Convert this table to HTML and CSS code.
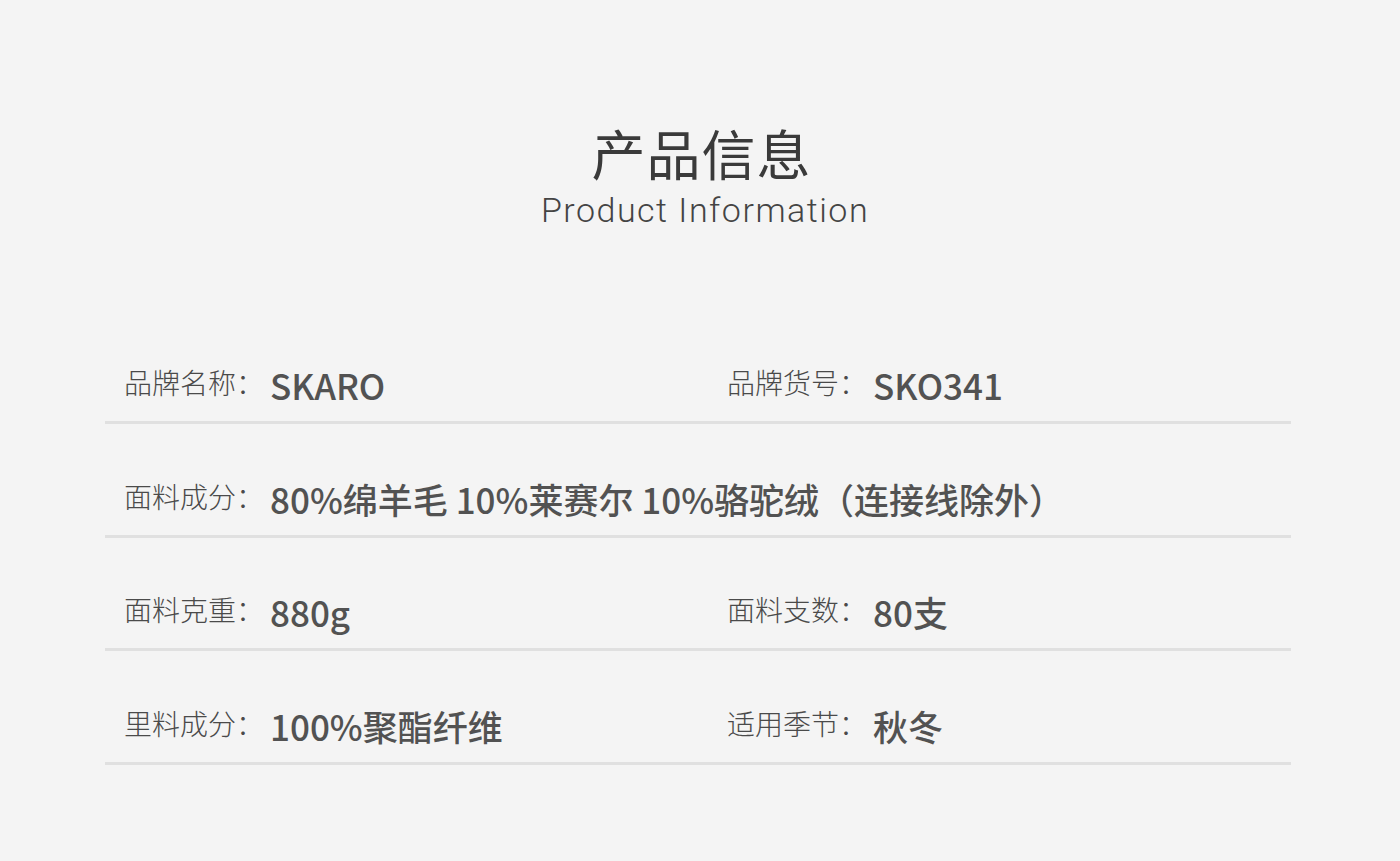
FILE: index.html
```html
<!DOCTYPE html>
<html lang="zh-CN">
<head>
<meta charset="utf-8">
<title>产品信息</title>
<link rel="stylesheet" href="styles.css">
</head>
<body>
<main class="page">
  <header class="header">
    <h1 class="title">产品信息</h1>
    <p class="subtitle">Product Information</p>
  </header>
  <section class="table">
    <div class="row">
      <div class="item"><span class="label">品牌名称：</span><span class="value">SKARO</span></div>
      <div class="item"><span class="label">品牌货号：</span><span class="value">SKO341</span></div>
    </div>
    <div class="row">
      <div class="item wide"><span class="label">面料成分：</span><span class="value">80%绵羊毛 10%莱赛尔 10%骆驼绒（连接线除外）</span></div>
    </div>
    <div class="row">
      <div class="item"><span class="label">面料克重：</span><span class="value">880g</span></div>
      <div class="item"><span class="label">面料支数：</span><span class="value">80支</span></div>
    </div>
    <div class="row">
      <div class="item"><span class="label">里料成分：</span><span class="value">100%聚酯纤维</span></div>
      <div class="item"><span class="label">适用季节：</span><span class="value">秋冬</span></div>
    </div>
  </section>
</main>
</body>
</html>
```

FILE: styles.css
```css
html, body {
  margin: 0;
  padding: 0;
}
body {
  background: #f4f4f4;
  font-family: "Noto Sans CJK SC", "Noto Sans", sans-serif;
  color: #444;
  width: 1400px;
  height: 861px;
  overflow: hidden;
}
.page {
  display: flex;
  flex-direction: column;
  align-items: center;
}
.header {
  padding-top: 122px;
  display: flex;
  flex-direction: column;
  align-items: center;
}
.title {
  margin: 0;
  font-size: 54px;
  line-height: 62px;
  font-weight: 400;
  color: #3a3a3a;
  letter-spacing: 1px;
  padding-left: 3px;
}
.subtitle {
  margin: 6px 0 0;
  font-family: "Roboto", "Noto Sans", sans-serif;
  font-weight: 300;
  font-size: 34px;
  line-height: 40px;
  letter-spacing: 1.5px;
  color: #444;
  padding-left: 10px;
}
.table {
  margin-top: 80px;
  width: 1186px;
  margin-left: -4px;
}
.row {
  box-sizing: border-box;
  height: 113.5px;
  border-bottom: 3px solid #e0e0e0;
  display: grid;
  grid-template-columns: 603px 1fr;
  align-content: end;
  padding: 0 0 12px 19px;
}
.row:first-child {
  height: 114px;
}
.item {
  display: flex;
  align-items: center;
}
.item.wide {
  grid-column: 1 / span 2;
}
.label {
  font-size: 28px;
  line-height: 40px;
  font-weight: 300;
  color: #4a4a4a;
  width: 146px;
  flex: none;
  white-space: nowrap;
  margin-bottom: 6px;
}
.value {
  font-size: 35px;
  line-height: 48px;
  font-weight: 500;
  color: #525252;
  white-space: nowrap;
}
```
